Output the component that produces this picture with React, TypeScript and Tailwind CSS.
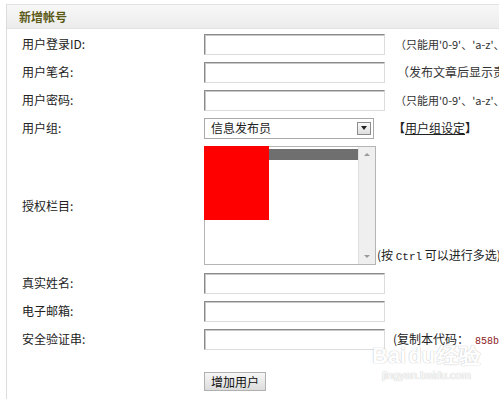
import React from "react";

const font = { fontFamily: '"Noto Sans CJK SC", "Noto Sans", sans-serif' };

function TextInput() {
  return (
    <div className="w-[181px] h-[21px] bg-white border border-t-[#8a8a8a] border-l-[#8a8a8a] border-b-[#dcdcdc] border-r-[#dcdcdc] shadow-[inset_1px_1px_0_#c8c8c8]" />
  );
}

function Row({ label, children, extra }: { label: string; children: React.ReactNode; extra?: React.ReactNode }) {
  return (
    <div className="flex items-center h-[28px]">
      <div className="w-[182px] shrink-0 text-[12px] text-[#222] leading-none">{label}</div>
      <div className="shrink-0">{children}</div>
      {extra}
    </div>
  );
}

export default function App() {
  return (
    <div className="w-[499px] h-[399px] overflow-hidden bg-white relative" style={font}>
      <div className="ml-[6px] mt-[4px] h-[395px] border-l border-[#dcdcdc]">
        <div className="h-[25px] border-t border-b border-[#e2e2e2] bg-gradient-to-b from-[#f7f7f7] to-[#ececec] flex items-center pl-[12px]">
          <span className="text-[12px] font-bold text-[#5b5a17] leading-none">新增帐号</span>
        </div>
        <div className="pl-[15px] pt-[1px]">
          <Row
            label="用户登录ID:"
            extra={<span className="ml-[10px] text-[11px] text-[#333] whitespace-nowrap">（只能用'0-9'、'a-z'、'A-Z'、'.'、'@'、'_'）</span>}
          >
            <TextInput />
          </Row>
          <Row
            label="用户笔名:"
            extra={<span className="ml-[12px] text-[12px] text-[#333] whitespace-nowrap">（发布文章后显示责任编辑的名字）</span>}
          >
            <TextInput />
          </Row>
          <Row
            label="用户密码:"
            extra={<span className="ml-[10px] text-[11px] text-[#333] whitespace-nowrap">（只能用'0-9'、'a-z'、'A-Z'、'.'、'@'、'_'）</span>}
          >
            <TextInput />
          </Row>
          <Row
            label="用户组:"
            extra={
              <span className="ml-[19px] text-[12px] text-[#222] whitespace-nowrap font-bold">
                【<span className="underline font-normal">用户组设定</span>】
              </span>
            }
          >
            <div className="w-[170px] h-[21px] border border-[#a9a9a9] bg-white flex items-center justify-between pl-[6px] pr-[2px]">
              <span className="text-[12px] text-[#222] leading-none">信息发布员</span>
              <div className="w-[14px] h-[13px] border border-[#8c8c8c] bg-gradient-to-b from-[#fafafa] to-[#dedede] flex items-center justify-center">
                <div className="w-0 h-0 border-l-[3px] border-r-[3px] border-t-[4px] border-l-transparent border-r-transparent border-t-[#222]" />
              </div>
            </div>
          </Row>
          <div className="flex items-center h-[127px]">
            <div className="w-[182px] shrink-0 text-[12px] text-[#222] leading-none">授权栏目:</div>
            <div className="flex items-end">
              <div className="w-[172px] h-[119px] border border-[#b5b5b5] bg-white flex relative">
                <div className="absolute left-[-1px] top-[-1px] w-[65px] h-[74px] bg-[#ff0000]" />
                <div className="flex-1 pt-[2px] pl-[64px]">
                  <div className="h-[11px] bg-[#6f6f6f]" />
                </div>
                <div className="w-[17px] bg-[#efefef] border-l border-[#e0e0e0] flex flex-col items-center justify-between py-[6px]">
                  <div className="w-0 h-0 border-l-[3px] border-r-[3px] border-b-[3px] border-l-transparent border-r-transparent border-b-[#999]" />
                  <div className="w-0 h-0 border-l-[3px] border-r-[3px] border-t-[3px] border-l-transparent border-r-transparent border-t-[#999]" />
                </div>
              </div>
              <span className="ml-[1px] mb-[2px] text-[12px] text-[#222] whitespace-nowrap leading-none">
                (按 <span style={{ fontFamily: '"Liberation Mono", monospace' }} className="text-[11px]">Ctrl</span> 可以进行多选)
              </span>
            </div>
          </div>
          <Row label="真实姓名:">
            <TextInput />
          </Row>
          <Row label="电子邮箱:">
            <TextInput />
          </Row>
          <Row
            label="安全验证串:"
            extra={
              <span className="ml-[8px] text-[12px] text-[#222] whitespace-nowrap">
                (复制本代码：
                <span className="ml-[6px] text-[10px] text-[#8b1c1c]" style={{ fontFamily: '"Liberation Mono", monospace' }}>
                  858bd2c1a7e4
                </span>
              </span>
            }
          >
            <TextInput />
          </Row>
          <div className="pl-[182px] mt-[19px]">
            <button className="w-[62px] h-[19px] border border-[#b0b0b0] bg-gradient-to-b from-[#f6f6f6] to-[#dcdcdc] text-[12px] text-[#111] leading-none flex items-center justify-center">
              增加用户
            </button>
          </div>
        </div>
      </div>
      <div className="absolute left-[372px] top-[345px] pointer-events-none flex flex-col items-center opacity-80">
        <span className="text-[22px] font-bold leading-none text-white [text-shadow:0_0_1px_#bbb,0_0_1px_#bbb]" style={{ fontFamily: '"Liberation Sans", sans-serif' }}>
          Bai<span className="mx-[2px]">du</span>经验
        </span>
        <span className="text-[11px] leading-none mt-[3px] text-white [text-shadow:0_0_1px_#bbb,0_0_1px_#bbb]" style={{ fontFamily: '"Liberation Sans", sans-serif' }}>
          jingyan.baidu.com
        </span>
      </div>
    </div>
  );
}
